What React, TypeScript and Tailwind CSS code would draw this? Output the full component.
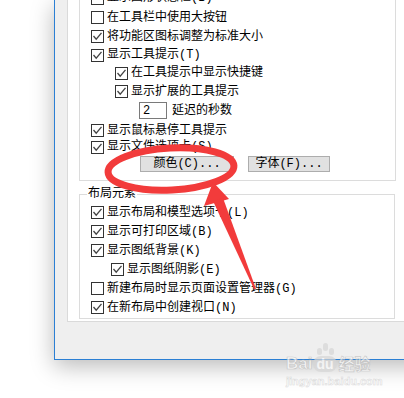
import type { ReactNode } from "react";

type RowProps = {
  checked: boolean;
  label: string;
  indent?: string;
  h: string;
};

function CheckBox({ checked }: { checked: boolean }) {
  return (
    <span className="w-[13px] h-[13px] border border-[#333333] bg-white flex items-center justify-center shrink-0">
      {checked && (
        <svg width="11" height="11" viewBox="0 0 11 11">
          <path d="M1.5 5 L4.2 8.2 L9.5 1.8" stroke="#444444" strokeWidth="1.3" fill="none" />
        </svg>
      )}
    </span>
  );
}

function Row({ checked, label, indent = "", h }: RowProps) {
  return (
    <div className={`flex items-center gap-[3px] ${h} ${indent}`}>
      <CheckBox checked={checked} />
      <span className="whitespace-nowrap">{label}</span>
    </div>
  );
}

function Button({ children, w }: { children: ReactNode; w: string }) {
  return (
    <div
      className={`${w} h-[16px] border border-[#adadad] bg-[#e1e1e1] flex items-center justify-center whitespace-nowrap`}
    >
      {children}
    </div>
  );
}

export default function App() {
  return (
    <div className="relative w-[404px] h-[398px] overflow-hidden bg-white text-[12px] leading-[14px] text-black font-['Liberation_Mono','Noto_Sans_CJK_SC',monospace]">
      {/* dialog window */}
      <div className="ml-[54px] w-[380px] h-[360px] border-l border-b border-[#2b7fd4] bg-[#efefef] pl-[12px] shadow-[0_6px_22px_rgba(0,0,0,0.28)]">
        <div className="h-[322px] border-l border-b border-[#dadada] bg-white overflow-hidden pl-[11px]">
          {/* top group, header scrolled off */}
          <div className="mt-[-30px] w-[317px] border border-[#dcdcdc] pl-[11px] pt-[17px] pb-[8px]">
            <Row checked={false} label="显示图形状态栏(B)" h="h-[20px]" />
            <Row checked={false} label="在工具栏中使用大按钮" h="h-[19px]" />
            <Row checked label="将功能区图标调整为标准大小" h="h-[19px]" />
            <Row checked label="显示工具提示(T)" h="h-[18px]" />
            <Row checked label="在工具提示中显示快捷键" indent="pl-[24px]" h="h-[18px]" />
            <Row checked label="显示扩展的工具提示" indent="pl-[24px]" h="h-[19px]" />
            <div className="flex items-center h-[19px] pl-[48px]">
              <div className="w-[28px] h-[17px] border border-[#7a7a7a] bg-white pl-[3px] flex items-center">2</div>
              <span className="ml-[5px]">延迟的秒数</span>
            </div>
            <Row checked label="显示鼠标悬停工具提示" h="h-[21px]" />
            <Row checked label="显示文件选项卡(S)" h="h-[12px]" />
            <div className="flex mt-[3px] ml-[49px] gap-[14px]">
              <Button w="w-[94px]">颜色(C)...</Button>
              <Button w="w-[82px]">字体(F)...</Button>
            </div>
          </div>

          {/* layout elements group */}
          <div className="relative mt-[13px] w-[316px] border-t border-l border-r border-[#dcdcdc] pl-[11px] pt-[8px] h-[124px]">
            <span className="absolute top-[-8px] left-[7px] bg-white px-[1px]">布局元素</span>
            <Row checked label="显示布局和模型选项卡(L)" h="h-[19px]" />
            <Row checked label="显示可打印区域(B)" h="h-[19px]" />
            <Row checked label="显示图纸背景(K)" h="h-[19px]" />
            <Row checked label="显示图纸阴影(E)" indent="pl-[20px]" h="h-[19px]" />
            <Row checked={false} label="新建布局时显示页面设置管理器(G)" h="h-[19px]" />
            <Row checked label="在新布局中创建视口(N)" h="h-[19px]" />
          </div>
          <div className="w-[316px] border-b border-[#dcdcdc]" />
        </div>
      </div>

      {/* red annotation */}
      <svg className="absolute inset-0 pointer-events-none" width="404" height="398" viewBox="0 0 404 398">
        <ellipse cx="171" cy="169" rx="63" ry="21" transform="rotate(-3 171 169)" fill="none" stroke="#f23b3b" strokeWidth="7" />
        <polygon points="213,182 204,206 229,199" fill="#f23b3b" />
        <polygon points="213,201 223,198 256,289 254,289" fill="#f23b3b" />
      </svg>

      {/* watermark */}
      <div className="absolute left-[286px] top-[342px] flex flex-col items-start opacity-70">
        <div className="flex items-end h-[30px]">
          <span className="text-[17px] leading-[17px] font-bold text-white font-['Liberation_Sans',sans-serif] [-webkit-text-stroke:0.7px_#bdbdbd]">Bai</span>
          <span className="relative ml-[1px] text-[14px] leading-[16px] font-bold text-white bg-[#d6d6d6] rounded-[8px] px-[3px] font-['Liberation_Sans',sans-serif]">
            du
            <span className="absolute left-[3px] top-[-15px] w-[18px] h-[14px] flex items-end justify-center gap-[1px]">
              <span className="w-[5px] h-[7px] rounded-full bg-[#d6d6d6]" />
              <span className="w-[5px] h-[8px] rounded-full bg-[#d6d6d6] mb-[4px]" />
              <span className="w-[5px] h-[7px] rounded-full bg-[#d6d6d6]" />
            </span>
          </span>
          <span className="ml-[2px] text-[16px] leading-[17px] font-bold text-white font-['Noto_Sans_CJK_SC',sans-serif] [-webkit-text-stroke:0.7px_#bdbdbd]">经验</span>
        </div>
        <span className="mt-[3px] text-[11px] leading-[12px] font-bold text-white font-['Liberation_Sans',sans-serif] [-webkit-text-stroke:0.5px_#cccccc]">jingyan.baidu.com</span>
      </div>
    </div>
  );
}
